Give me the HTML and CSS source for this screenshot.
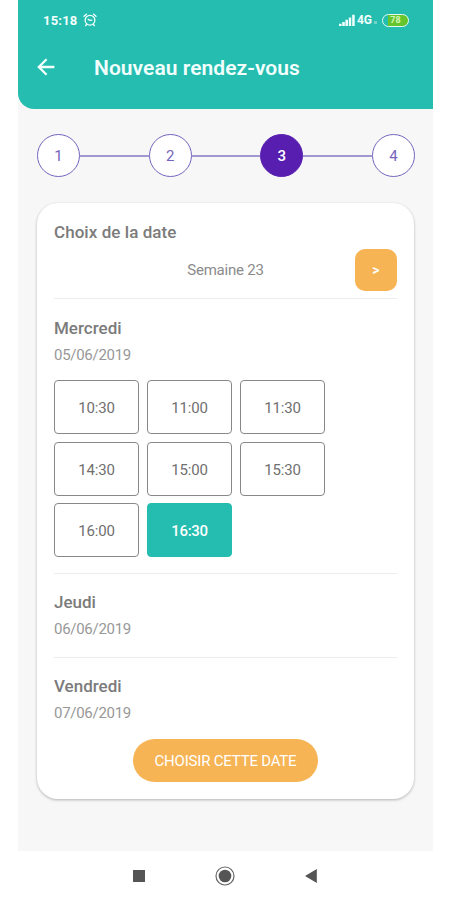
FILE: index.html
```html
<!DOCTYPE html>
<html lang="fr">
<head>
    <meta charset="UTF-8">
    <meta name="viewport" content="width=device-width, initial-scale=1.0">
    <title>Nouveau rendez-vous</title>
    <link rel="stylesheet" href="styles.css">
</head>
<body>
    <div class="phone">
        <!-- Header -->
        <header class="header">
            <div class="status-bar">
                <span class="clock">15:18</span>
                <svg class="alarm" width="14" height="14" viewBox="0 0 14 14" fill="none" stroke="currentColor" stroke-linecap="round">
                    <circle cx="7" cy="7.2" r="4.9" stroke-width="1.3"/>
                    <path d="M1 3.2 3.4 1.2M13 3.2 10.6 1.2M3.4 11.6 2.6 12.6M10.6 11.6 11.4 12.6" stroke-width="1.4"/>
                    <path d="M5.2 6.4 7 7.4 8.8 7.2" stroke-width="1.3"/>
                </svg>
                <svg class="signal" width="16" height="12" viewBox="0 0 16 12" fill="currentColor">
                    <path d="M0 9.8h2.6V12H0zM3.2 8h2.6V12H3.2zM6.4 5.8H9V12H6.4zM9.8 3.4h2.4V12h-2.4zM13.2.8h2.5V12h-2.5z"/>
                </svg>
                <span class="network">4G</span>
                <span class="network-dot"></span>
                <span class="battery">78</span>
            </div>
            <div class="title-bar">
                <svg class="back" width="18" height="18" viewBox="0 0 18 18" fill="none" stroke="currentColor" stroke-width="2.3">
                    <path d="M17.4 9H2M9.6 1.2 1.8 9l7.8 7.8"/>
                </svg>
                <h1>Nouveau rendez-vous</h1>
            </div>
        </header>

        <!-- Steps -->
        <div class="steps">
            <span class="step">1</span>
            <span class="line"></span>
            <span class="step">2</span>
            <span class="line"></span>
            <span class="step active">3</span>
            <span class="line"></span>
            <span class="step">4</span>
        </div>

        <!-- Date card -->
        <main class="card">
            <h2>Choix de la date</h2>
            <div class="week">
                <span class="week-label">Semaine 23</span>
                <button class="next-btn">&gt;</button>
            </div>

            <section class="day">
                <h3>Mercredi</h3>
                <p class="date">05/06/2019</p>
                <div class="slots">
                    <button class="slot">10:30</button>
                    <button class="slot">11:00</button>
                    <button class="slot">11:30</button>
                    <button class="slot">14:30</button>
                    <button class="slot">15:00</button>
                    <button class="slot">15:30</button>
                    <button class="slot">16:00</button>
                    <button class="slot selected">16:30</button>
                </div>
            </section>

            <section class="day">
                <h3>Jeudi</h3>
                <p class="date">06/06/2019</p>
            </section>

            <section class="day">
                <h3>Vendredi</h3>
                <p class="date">07/06/2019</p>
            </section>

            <button class="submit-btn">CHOISIR CETTE DATE</button>
        </main>

        <!-- Android navigation -->
        <nav class="nav-bar">
            <svg width="20" height="20" viewBox="0 0 20 20" fill="#555">
                <rect x="4" y="4" width="12" height="12"/>
            </svg>
            <svg width="20" height="20" viewBox="0 0 20 20">
                <circle cx="10" cy="10" r="9" fill="none" stroke="#666" stroke-width="1.2"/>
                <circle cx="10" cy="10" r="6.3" fill="#555"/>
            </svg>
            <svg width="20" height="20" viewBox="0 0 20 20" fill="#555">
                <path d="M4 10 15.8 3v14z"/>
            </svg>
        </nav>
    </div>
</body>
</html>
```
FILE: styles.css
```css
* {
    margin: 0;
    padding: 0;
    box-sizing: border-box;
    font-family: Roboto, sans-serif;
}

body {
    background-color: #fff;
    color: #7b7b7b;
}

.phone {
    width: 415px;
    height: 900px;
    margin-left: 18px;
    background-color: #f7f7f7;
    display: flex;
    flex-direction: column;
    overflow: hidden;
}

/* Header */
.header {
    height: 109px;
    flex-shrink: 0;
    background-color: #24bdb0;
    border-bottom-left-radius: 16px;
    color: #f2fffd;
}

.status-bar {
    height: 40px;
    padding: 0 24px 0 25px;
    display: flex;
    align-items: center;
}

.clock {
    width: 35px;
    font-size: 13px;
    font-weight: 700;
    letter-spacing: 0.2px;
}

.alarm {
    margin-left: 5px;
}

.signal {
    margin-left: auto;
}

.network {
    margin-left: 2px;
    font-size: 12px;
    font-weight: 700;
}

.network-dot {
    width: 3px;
    height: 3px;
    margin: 5px 5px 0 2px;
    background-color: #6fd3ca;
}

.battery {
    width: 27px;
    height: 13px;
    border: 1.5px solid #e4fbf2;
    border-radius: 7px;
    background: linear-gradient(to right, #24bdb0 22%, #66c52c 22%);
    color: #d3f5b8;
    font-size: 9px;
    font-weight: 700;
    line-height: 11px;
    text-align: center;
}

.title-bar {
    height: 56px;
    padding-left: 19px;
    display: flex;
    align-items: center;
}

.back {
    margin-top: -3px;
}

.title-bar h1 {
    margin-left: 39px;
    font-size: 21px;
    font-weight: 600;
    letter-spacing: 0.05px;
    line-height: 26px;
}

/* Steps */
.steps {
    margin: 25px 18px 0 19px;
    display: flex;
    align-items: center;
    flex-shrink: 0;
}

.step {
    width: 43px;
    height: 43px;
    border: 1px solid #7564bd;
    border-radius: 50%;
    background-color: #fff;
    color: #7564bd;
    font-size: 15px;
    line-height: 43px;
    text-align: center;
}

.step.active {
    background-color: #581eb0;
    border-color: #581eb0;
    color: #fff;
    font-weight: 500;
}

.line {
    flex: 1;
    height: 2px;
    background-color: #a198d0;
}

/* Card */
.card {
    height: 596px;
    flex-shrink: 0;
    margin: 26px 19px 0;
    padding: 19px 17px 0;
    border-radius: 21px;
    background-color: #fff;
    box-shadow: 0 1px 3px rgba(0, 0, 0, 0.28);
}

.card h2,
.day h3 {
    font-size: 17px;
    font-weight: 500;
    line-height: 20px;
}

.card h2 {
    letter-spacing: 0.06px;
}

.week {
    height: 57px;
    padding-top: 7px;
    display: flex;
    border-bottom: 1px solid #ececec;
}

.week-label {
    flex: 1;
    padding-left: 42px;
    font-size: 15px;
    letter-spacing: -0.2px;
    line-height: 43px;
    text-align: center;
    color: #8b8b8b;
}

.next-btn {
    width: 42px;
    height: 42px;
    border: none;
    border-radius: 10px;
    background-color: #f7b455;
    color: #fff;
    font-size: 14px;
    font-weight: 600;
}

/* Days */
.day {
    height: 84px;
    padding-top: 19px;
}

.day + .day {
    padding-top: 18px;
    border-top: 1px solid #ececec;
}

.day:has(.slots) {
    height: 274px;
}

.date {
    margin-top: 8px;
    font-size: 15px;
    letter-spacing: -0.28px;
    line-height: 18px;
    color: #989898;
}

.slots {
    margin-top: 16px;
    display: grid;
    grid-template-columns: repeat(3, 85px);
    grid-auto-rows: 54px;
    gap: 7.5px 8px;
}

.slot {
    padding-top: 2px;
    border: 1px solid #888;
    border-radius: 4px;
    background-color: #fff;
    color: #707070;
    font-size: 15px;
    letter-spacing: -0.2px;
}

.slot.selected {
    border-color: #24bdb0;
    background-color: #24bdb0;
    color: #fff;
    font-weight: 500;
    letter-spacing: -0.3px;
}

.submit-btn {
    display: block;
    width: 185px;
    height: 43px;
    margin: -2px auto 0;
    border: none;
    border-radius: 22px;
    background-color: #f7b455;
    color: #fff;
    font-size: 15px;
    letter-spacing: -0.2px;
}

/* Navigation bar */
.nav-bar {
    height: 49px;
    margin-top: auto;
    padding: 0 112px 0 111px;
    display: flex;
    justify-content: space-between;
    align-items: center;
    background-color: #fff;
}
```
